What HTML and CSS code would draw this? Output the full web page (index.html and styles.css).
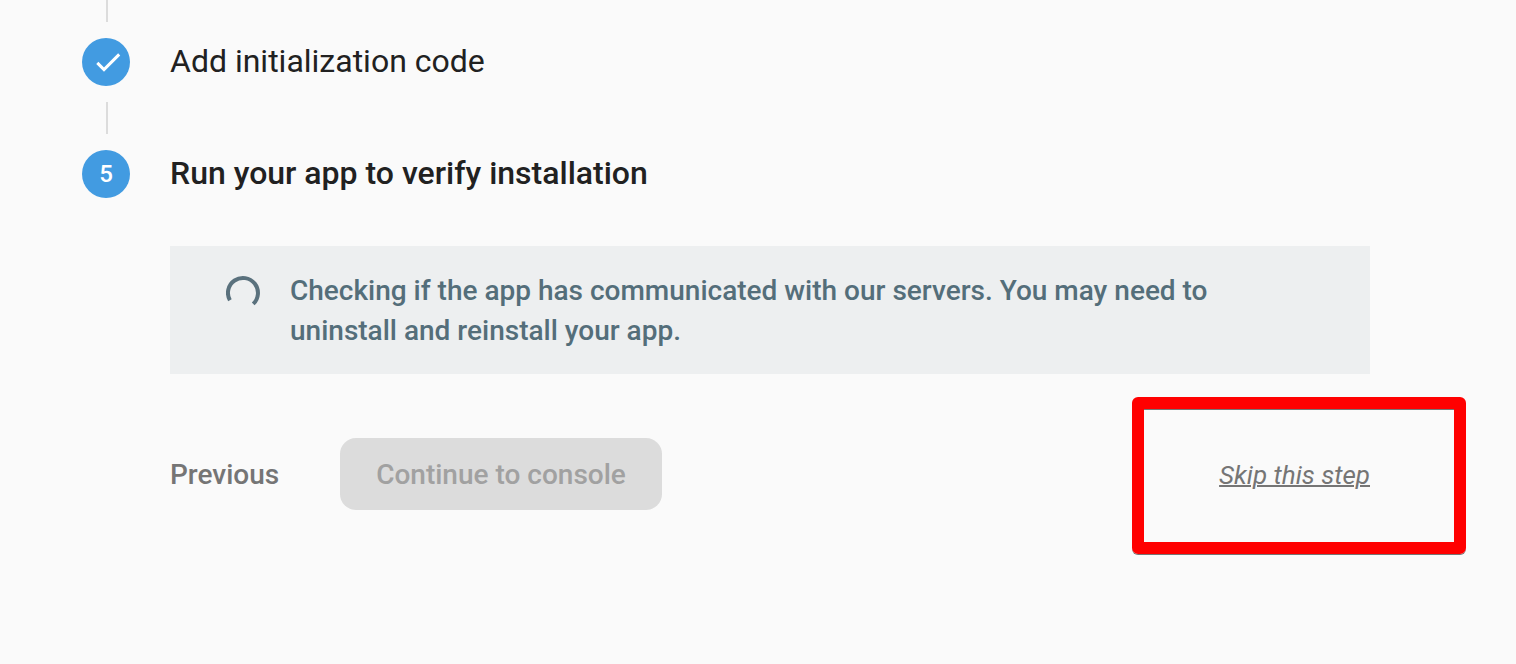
FILE: index.html
```html
<!DOCTYPE html>
<html lang="en">
<head>
<meta charset="utf-8">
<meta name="viewport" content="width=device-width, initial-scale=1">
<title>Add initialization code</title>
<link rel="stylesheet" href="styles.css">
</head>
<body>
<main class="stepper">
  <div class="connector connector-first"></div>
  <section class="step">
    <span class="marker">
      <svg class="check" viewBox="0 0 48 48" aria-hidden="true"><path d="M15.300 24.900L22 31.600L37.200 16.400"/></svg>
    </span>
    <h2 class="title">Add initialization code</h2>
  </section>
  <div class="connector"></div>
  <section class="step">
    <span class="marker">5</span>
    <h2 class="title title-current">Run your app to verify installation</h2>
  </section>
  <div class="content">
    <div class="status" role="status">
      <svg class="spinner" viewBox="0 0 40 40" aria-hidden="true"><path d="M3.900 29.300A15 15 0 1 1 27.200 32.900"/></svg>
      <p class="message">Checking if the app has communicated with our servers. You may need to uninstall and reinstall your app.</p>
    </div>
    <div class="actions">
      <button class="previous" type="button">Previous</button>
      <button class="continue" type="button" disabled>Continue to console</button>
      <div class="skip"><a class="skip-link" href="#">Skip this step</a><span class="highlight"></span></div>
    </div>
  </div>
</main>
</body>
</html>
```
FILE: styles.css
```css
* { box-sizing: border-box; }
body { margin: 0; background: #fafafa; color: #212121; font-family: Roboto, sans-serif; }
.stepper { padding: 0 146px 96px 82px; }
.connector { width: 2px; height: 32px; margin: 16px 0 16px 24px; background: #dcdcdc; }
.connector-first { height: 22px; margin-top: 0; }
.step { display: flex; align-items: flex-start; gap: 40px; min-height: 48px; }
.marker { flex: none; display: flex; align-items: center; justify-content: center; width: 48px; height: 48px; border-radius: 50%; background: #429be1; color: #fff; font-size: 24px; font-weight: 500; }
.check { width: 48px; height: 48px; fill: none; stroke: #fff; stroke-width: 3; }
.title { margin: 0; font-size: 32px; line-height: 46px; font-weight: 400; }
.title-current { font-weight: 500; }
.content { padding: 48px 0 0 88px; }
.status { display: flex; gap: 24px; padding: 25px 56px 23px; background: #edeff0; color: #546e7a; }
.spinner { flex: none; width: 40px; height: 40px; fill: none; stroke: #5a717d; stroke-width: 4; }
.message { max-width: 960px; margin: 0; font-size: 28px; line-height: 40px; font-weight: 500; }
.actions { display: flex; align-items: center; margin-top: 64px; }
.previous, .continue { border: 0; font-family: inherit; font-size: 28px; font-weight: 500; }
.previous { min-width: 170px; padding: 0; background: none; color: #757575; text-align: left; }
.continue { min-width: 322px; height: 72px; padding: 0 32px; border-radius: 16px; background: #dcdcdc; color: #a1a1a1; }
.skip { position: relative; margin-left: auto; padding-top: 2px; }
.skip-link { color: #757575; font-size: 26px; line-height: 32px; font-style: italic; text-decoration: underline; text-decoration-thickness: 2px; }
.highlight { position: absolute; inset: -60px -96px -63px -87px; border: 12px solid #f00; border-radius: 6px; box-shadow: 0 1px 0 #757575, inset 0 1px 0 #757575; pointer-events: none; }
```
